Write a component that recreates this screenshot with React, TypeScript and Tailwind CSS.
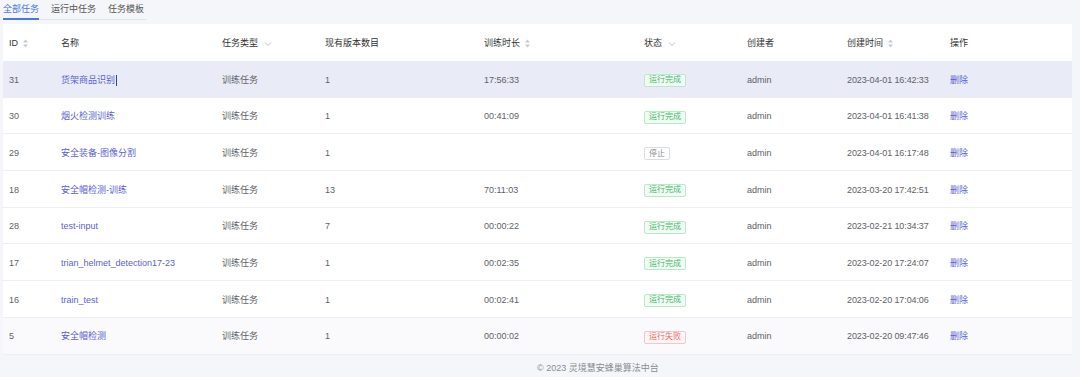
import React from "react";

type Status = "done" | "stop" | "fail";
const rows: { id: string; name: string; ver: string; dur: string; status: Status; time: string }[] = [
  { id: "31", name: "货架商品识别", ver: "1", dur: "17:56:33", status: "done", time: "2023-04-01 16:42:33" },
  { id: "30", name: "烟火检测训练", ver: "1", dur: "00:41:09", status: "done", time: "2023-04-01 16:41:38" },
  { id: "29", name: "安全装备-图像分割", ver: "1", dur: "", status: "stop", time: "2023-04-01 16:17:48" },
  { id: "18", name: "安全帽检测-训练", ver: "13", dur: "70:11:03", status: "done", time: "2023-03-20 17:42:51" },
  { id: "28", name: "test-input", ver: "7", dur: "00:00:22", status: "done", time: "2023-02-21 10:34:37" },
  { id: "17", name: "trian_helmet_detection17-23", ver: "1", dur: "00:02:35", status: "done", time: "2023-02-20 17:24:07" },
  { id: "16", name: "train_test", ver: "1", dur: "00:02:41", status: "done", time: "2023-02-20 17:04:06" },
  { id: "5", name: "安全帽检测", ver: "1", dur: "00:00:02", status: "fail", time: "2023-02-20 09:47:46" },
];

const Sort = () => (
  <svg width="7" height="9" viewBox="0 0 7 9" className="ml-[4px]">
    <path d="M3.5 0.5 L6 3.5 L1 3.5 Z" fill="#c8cad0" />
    <path d="M3.5 8.5 L6 5.5 L1 5.5 Z" fill="#c8cad0" />
  </svg>
);
const Chev = () => (
  <svg width="8" height="6" viewBox="0 0 8 6" className="ml-[6px]">
    <path d="M1 1.5 L4 4.5 L7 1.5" fill="none" stroke="#b8bac0" strokeWidth="0.9" />
  </svg>
);

const Tag = ({ s }: { s: Status }) => {
  if (s === "done")
    return (
      <span className="inline-flex h-[13px] items-center rounded-[2px] border border-[#b5ebc6] bg-[#f2fcf5] px-[4px] text-[8px] leading-none text-[#3dbb6a]">
        运行完成
      </span>
    );
  if (s === "stop")
    return (
      <span className="inline-flex h-[13px] items-center rounded-[2px] border border-[#dcdde0] bg-white px-[4px] text-[8px] leading-none text-[#8a8c90]">
        停止
      </span>
    );
  return (
    <span className="inline-flex h-[13px] items-center rounded-[2px] border border-[#f8c4c4] bg-[#fff6f6] px-[4px] text-[8px] leading-none text-[#f06b6b]">
      运行失败
    </span>
  );
};

const cols = "grid grid-cols-[52px_161px_103px_159px_160px_103px_100px_103px_1fr] pl-[6px]";

export default function App() {
  return (
    <div
      className="h-[377px] w-[1080px] overflow-hidden bg-[#f5f6fa] text-[9px]"
      style={{ fontFamily: '"Liberation Sans", Arial, "Noto Sans CJK SC", sans-serif' }}
    >
      <div className="flex h-[24px] items-start">
        <div className="ml-[3px] flex w-[143px] border-b border-[#e1e3e8]">
          <div className="relative mr-[12px] flex h-[19px] items-center text-[#4a78dc]">
            全部任务
            <div className="absolute bottom-[-1px] left-0 h-[2px] w-full bg-[#4a78dc]" />
          </div>
          <div className="mr-[12px] flex h-[19px] items-center text-[#555]">运行中任务</div>
          <div className="flex h-[19px] items-center text-[#555]">任务模板</div>
        </div>
      </div>
      <div className="ml-[3px] w-[1069px] bg-white">
        <div className={`${cols} h-[37px] items-center pt-[2px] text-[#333]`}>
          <div className="flex items-center">ID<Sort /></div>
          <div>名称</div>
          <div className="flex items-center">任务类型<Chev /></div>
          <div>现有版本数目</div>
          <div className="flex items-center">训练时长<Sort /></div>
          <div className="flex items-center">状态<Chev /></div>
          <div>创建者</div>
          <div className="flex items-center">创建时间<Sort /></div>
          <div>操作</div>
        </div>
        {rows.map((r, i) => (
          <div
            key={r.id}
            className={`${cols} h-[36.7px] items-center border-b border-[#eceef4] pt-[3px] text-[#606266] ${
              i === 0 ? "bg-[#e9ebf7]" : i === rows.length - 1 ? "bg-[#fafafc]" : "bg-white"
            }`}
          >
            <div>{r.id}</div>
            <div className="flex items-center text-[#5a5fd2]">
              {r.name}
              {i === 0 && <span className="ml-[1px] inline-block h-[11px] w-[1px] bg-[#3a3f9a]" />}
            </div>
            <div>训练任务</div>
            <div>{r.ver}</div>
            <div>{r.dur}</div>
            <div className="flex items-center">
              <Tag s={r.status} />
            </div>
            <div>admin</div>
            <div className="tracking-[-0.1px]">{r.time}</div>
            <div className="text-[#5a5fd2]">删除</div>
          </div>
        ))}
      </div>
      <div className="flex h-[23px] items-center pl-[537px] pt-[6px] text-[#8a8c92]">© 2023 灵境慧安蜂巢算法中台</div>
    </div>
  );
}
